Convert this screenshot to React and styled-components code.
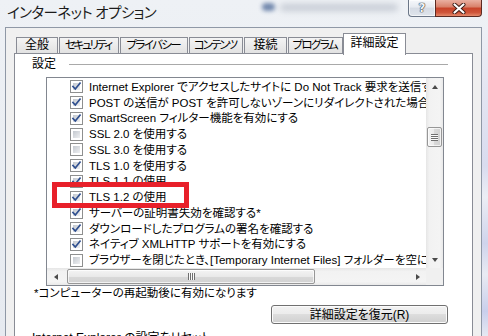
import React from "react";
import styled, { createGlobalStyle } from "styled-components";

const Global = createGlobalStyle`
  html, body { margin: 0; padding: 0; background: #fff; }
  body { width: 488px; height: 336px; overflow: hidden; }
`;

const FONT = `"Liberation Sans", "Noto Sans CJK JP", sans-serif`;

const Window = styled.div`
  width: 488px;
  height: 336px;
  overflow: hidden;
  position: relative;
  display: flex;
  flex-direction: column;
  background: linear-gradient(#eef1f5, #e6eaf0);
  font-family: ${FONT};
  font-feature-settings: "palt";
  color: #000;
`;

const TitleBar = styled.div`
  height: 27px;
  flex: none;
  position: relative;
  display: flex;
  align-items: flex-start;
`;

const Title = styled.div`
  font-size: 14.5px;
  line-height: 18px;
  letter-spacing: -0.6px;
  padding: 4px 0 0 7px;
  color: #1b1b1b;
  position: relative;
  z-index: 1;
`;

const GlassBlob = styled.span`
  position: absolute;
  left: ${(p) => p.$x}px;
  top: ${(p) => p.$y}px;
  width: ${(p) => p.$w}px;
  height: ${(p) => p.$h}px;
  background: ${(p) => p.$c};
  filter: blur(${(p) => p.$b}px);
  opacity: ${(p) => p.$o};
  border-radius: 4px;
`;

const Captions = styled.div`
  margin-left: auto;
  margin-right: 6px;
  display: flex;
  position: relative;
  z-index: 1;
`;

const HelpButton = styled.div`
  box-sizing: border-box;
  width: 27px;
  height: 17px;
  border: 1px solid #6b7687;
  border-top: none;
  border-right: none;
  border-radius: 0 0 0 4px;
  background: linear-gradient(#f6f8fb, #e6eaf0 45%, #d5dbe4 50%, #dfe4eb);
  box-shadow: inset 0 0 0 1px rgba(255, 255, 255, 0.6);
  display: flex;
  align-items: center;
  justify-content: center;
  font-family: "DejaVu Sans", sans-serif;
  font-weight: bold;
  font-size: 12px;
  color: #f2f4f7;
  text-shadow: 0 0 1px #2c3440, 0 0 1px #2c3440, 0 0 1px #2c3440;
`;

const CloseButton = styled.div`
  box-sizing: border-box;
  width: 47px;
  height: 17px;
  border: 1px solid #5b2a22;
  border-top: none;
  border-radius: 0 0 4px 0;
  background: linear-gradient(#eab0a2, #d9826c 42%, #c8442b 52%, #cf553a 78%, #e58a6c);
  display: flex;
  align-items: center;
  justify-content: center;
`;

const Body = styled.div`
  flex: 1;
  display: flex;
  min-height: 0;
`;

const FrameLeft = styled.div`
  width: 5px;
  flex: none;
`;

const FrameRight = styled.div`
  width: 6px;
  flex: none;
  background: linear-gradient(#eef0f6 0%, #e4e6f2 20%, #d9dcef 45%, #eceef5 55%, #cfd4ec 70%, #e9ebf3 80%, #c9cfec 92%, #e6e9f2);
`;

const Client = styled.div`
  flex: 1;
  min-width: 0;
  box-sizing: border-box;
  border: 1px solid #8f98a6;
  border-bottom: none;
  background: #f0f0f0;
  padding: 5px 8px 0 8px;
  display: flex;
  flex-direction: column;
`;

const TabStrip = styled.div`
  height: 20px;
  flex: none;
  display: flex;
  align-items: flex-end;
  padding-left: 2px;
`;

const Tab = styled.div`
  box-sizing: border-box;
  flex: none;
  width: ${(p) => p.$w}px;
  height: ${(p) => (p.$active ? 22 : 16)}px;
  margin-right: 1px;
  margin-left: ${(p) => (p.$active ? -1 : 0)}px;
  margin-bottom: ${(p) => (p.$active ? -2 : 0)}px;
  border: 1px solid #898c95;
  border-bottom: none;
  background: ${(p) => (p.$active ? "#ffffff" : "linear-gradient(#f4f4f4, #e2e2e2)")};
  position: relative;
  z-index: ${(p) => (p.$active ? 2 : 0)};
  font-size: ${(p) => (p.$ls < 0 ? 11.5 : 12)}px;
  line-height: 14px;
  letter-spacing: ${(p) => p.$ls}px;
  text-indent: ${(p) => p.$ls}px;
  text-align: center;
  white-space: nowrap;
  padding-top: ${(p) => (p.$active ? 2 : 0)}px;
`;

const Panel = styled.div`
  flex: 1;
  min-height: 0;
  box-sizing: border-box;
  border: 1px solid #898c95;
  border-bottom: none;
  background: #ffffff;
  padding: 4px 24px 0 16px;
  display: flex;
  flex-direction: column;
`;

const GroupLabel = styled.div`
  display: flex;
  align-items: center;
  gap: 13px;
  font-size: 12px;
  line-height: 13px;
  padding-left: 1px;
  white-space: nowrap;
  margin-top: ${(p) => p.$mt || 0}px;
  &::after {
    content: "";
    flex: 1;
    height: 1px;
    background: #a9a9a9;
  }
`;

const ListBox = styled.div`
  margin: 6px 4px 0 15px;
  height: 209px;
  flex: none;
  box-sizing: border-box;
  border: 1px solid #828790;
  background: #fff;
  display: grid;
  grid-template-columns: minmax(0, 1fr) 17px;
  grid-template-rows: minmax(0, 1fr) 17px;
`;

const Rows = styled.div`
  overflow: hidden;
  padding-top: 1px;
  min-width: 0;
`;

const Row = styled.div`
  height: 15.75px;
  display: flex;
  align-items: center;
  padding-left: 23px;
  white-space: nowrap;
  font-size: 11.5px;
  line-height: 14px;
`;

const Box = styled.span`
  box-sizing: border-box;
  flex: none;
  width: 13px;
  height: 13px;
  border: 1px solid #8e8f8f;
  background: #fff;
  padding: 2px;
  margin-right: 6px;
  display: flex;
`;

const BoxInner = styled.span`
  flex: 1;
  background: linear-gradient(135deg, #c3c8cf, #eff0f2);
  display: flex;
  align-items: center;
  justify-content: center;
  position: relative;
`;

const CheckSvg = styled.svg`
  position: absolute;
  left: -2px;
  top: -2px;
`;

const VScroll = styled.div`
  display: flex;
  flex-direction: column;
  background: linear-gradient(to right, #e6e6e6, #f2f2f2 20%, #f4f4f4 80%, #e9e9e9);
`;

const HScroll = styled.div`
  display: flex;
  align-items: center;
  background: linear-gradient(#e6e6e6, #f2f2f2 20%, #f4f4f4 80%, #e9e9e9);
`;

const Corner = styled.div`
  background: #f0f0f0;
`;

const ArrowButton = styled.div`
  width: 17px;
  height: 17px;
  flex: none;
  display: flex;
  align-items: center;
  justify-content: center;
`;

const Tri = styled.span`
  width: 0;
  height: 0;
  ${(p) =>
    p.$dir === "up"
      ? "border-left:3.5px solid transparent;border-right:3.5px solid transparent;border-bottom:4px solid #4a4a4a;"
      : p.$dir === "down"
      ? "border-left:3.5px solid transparent;border-right:3.5px solid transparent;border-top:4px solid #4a4a4a;"
      : p.$dir === "left"
      ? "border-top:3.5px solid transparent;border-bottom:3.5px solid transparent;border-right:4px solid #4a4a4a;"
      : "border-top:3.5px solid transparent;border-bottom:3.5px solid transparent;border-left:4px solid #4a4a4a;"}
`;

const Track = styled.div`
  flex: 1;
  min-width: 0;
  min-height: 0;
  display: flex;
  flex-direction: ${(p) => (p.$vertical ? "column" : "row")};
  align-items: center;
`;

const VThumb = styled.div`
  box-sizing: border-box;
  width: 15px;
  height: 20px;
  margin-top: 32px;
  border: 1px solid #979797;
  border-radius: 2px;
  background: linear-gradient(to right, #f4f4f4, #e9e9e9 50%, #d9d9d9 50%, #d2d2d2);
  box-shadow: inset 0 0 0 1px rgba(255, 255, 255, 0.7);
  display: flex;
  align-items: center;
  justify-content: center;
`;

const VGrip = styled.span`
  width: 7px;
  height: 7px;
  background: repeating-linear-gradient(#6f6f6f 0 1px, #fafafa 1px 2px);
`;

const HThumb = styled.div`
  box-sizing: border-box;
  width: 248px;
  height: 15px;
  margin-left: 3px;
  border: 1px solid #979797;
  border-radius: 2px;
  background: linear-gradient(#f4f4f4, #e9e9e9 50%, #d9d9d9 50%, #d2d2d2);
  box-shadow: inset 0 0 0 1px rgba(255, 255, 255, 0.7);
  display: flex;
  align-items: center;
  justify-content: center;
`;

const HGrip = styled.span`
  width: 7px;
  height: 7px;
  background: repeating-linear-gradient(to right, #6f6f6f 0 1px, #fafafa 1px 2px);
`;

const Note = styled.div`
  margin-left: 3px;
  font-size: 11.5px;
  line-height: 14px;
  white-space: nowrap;
`;

const Button = styled.div`
  align-self: flex-end;
  box-sizing: border-box;
  width: 177px;
  height: 19px;
  margin-top: 5px;
  flex: none;
  border: 1px solid #707070;
  border-radius: 3px;
  background: linear-gradient(#f2f2f2, #ebebeb 50%, #dddddd 50%, #cfcfcf);
  box-shadow: inset 0 0 0 1px #fbfbfb;
  display: flex;
  align-items: center;
  justify-content: center;
  font-size: 12px;
  line-height: 14px;
  white-space: nowrap;
`;

const Highlight = styled.div`
  position: absolute;
  left: 52px;
  top: 182px;
  width: 137px;
  height: 26px;
  box-sizing: border-box;
  border: 5px solid #e8202a;
`;

const rows = [
  [true, "Internet Explorer でアクセスしたサイトに Do Not Track 要求を送信する"],
  [true, "POST の送信が POST を許可しないゾーンにリダイレクトされた場合に警告する"],
  [true, "SmartScreen フィルター機能を有効にする"],
  [false, "SSL 2.0 を使用する"],
  [false, "SSL 3.0 を使用する"],
  [true, "TLS 1.0 を使用する"],
  [true, "TLS 1.1 の使用"],
  [true, "TLS 1.2 の使用"],
  [true, "サーバーの証明書失効を確認する*"],
  [true, "ダウンロードしたプログラムの署名を確認する"],
  [true, "ネイティブ XMLHTTP サポートを有効にする"],
  [false, "ブラウザーを閉じたとき、[Temporary Internet Files] フォルダーを空にする"],
];

const tabs = [
  ["全般", 42, 0],
  ["セキュリティ", 60, -2.2],
  ["プライバシー", 68, -1.6],
  ["コンテンツ", 54, -2],
  ["接続", 43, 0],
  ["プログラム", 55, -1.6],
  ["詳細設定", 63, 0, true],
];

function Checkbox({ checked }) {
  return (
    <Box>
      <BoxInner>
        {checked && (
          <CheckSvg width="11" height="11" viewBox="0 0 11 11">
            <path d="M2 5.5 L4.3 8 L9 2.2" fill="none" stroke="#2f4f8f" strokeWidth="1.7" strokeLinecap="square" />
          </CheckSvg>
        )}
      </BoxInner>
    </Box>
  );
}

export default function App() {
  return (
    <Window>
      <Global />
      <TitleBar>
        <GlassBlob $x={262} $y={3} $w={13} $h={8} $c="#4a6796" $b={2} $o={0.75} />
        <GlassBlob $x={280} $y={4} $w={118} $h={7} $c="#7d8799" $b={3} $o={0.35} />
        <Title>インターネット オプション</Title>
        <Captions>
          <HelpButton>?</HelpButton>
          <CloseButton>
            <svg width="14" height="11" viewBox="0 0 14 11">
              <path d="M2.5 1.5 L11.5 9.5 M11.5 1.5 L2.5 9.5" stroke="#3a1a14" strokeWidth="4" strokeLinecap="round" />
              <path d="M2.5 1.5 L11.5 9.5 M11.5 1.5 L2.5 9.5" stroke="#ffffff" strokeWidth="2.2" strokeLinecap="round" />
            </svg>
          </CloseButton>
        </Captions>
      </TitleBar>
      <Body>
        <FrameLeft />
        <Client>
          <TabStrip>
            {tabs.map(([label, w, ls, active]) => (
              <Tab key={label} $w={w} $ls={ls} $active={active}>
                {label}
              </Tab>
            ))}
          </TabStrip>
          <Panel>
            <GroupLabel>設定</GroupLabel>
            <ListBox>
              <Rows>
                {rows.map(([checked, text]) => (
                  <Row key={text}>
                    <Checkbox checked={checked} />
                    {text}
                  </Row>
                ))}
              </Rows>
              <VScroll>
                <ArrowButton>
                  <Tri $dir="up" />
                </ArrowButton>
                <Track $vertical>
                  <VThumb>
                    <VGrip />
                  </VThumb>
                </Track>
                <ArrowButton>
                  <Tri $dir="down" />
                </ArrowButton>
              </VScroll>
              <HScroll>
                <ArrowButton>
                  <Tri $dir="left" />
                </ArrowButton>
                <Track>
                  <HThumb>
                    <HGrip />
                  </HThumb>
                </Track>
                <ArrowButton>
                  <Tri $dir="right" />
                </ArrowButton>
              </HScroll>
              <Corner />
            </ListBox>
            <Note>*コンピューターの再起動後に有効になります</Note>
            <Button>詳細設定を復元(R)</Button>
            <GroupLabel $mt={8}>Internet Explorer の設定をリセット</GroupLabel>
          </Panel>
        </Client>
        <FrameRight />
      </Body>
      <Highlight />
    </Window>
  );
}
